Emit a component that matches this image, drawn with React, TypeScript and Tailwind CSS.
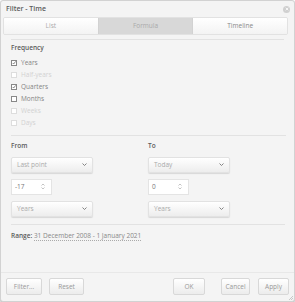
import React from "react";

const Check: React.FC<{ label: string; checked?: boolean; disabled?: boolean }> = ({
  label,
  checked,
  disabled,
}) => (
  <div className={`flex h-[12px] items-center gap-[4px] ${disabled ? "text-[#d2d2d2]" : "text-[#858585]"}`}>
    <span
      className={`flex h-[6px] w-[6px] items-center justify-center border bg-white ${
        disabled ? "border-[#ddd]" : "border-[#888]"
      }`}
    >
      {checked && (
        <svg width="6" height="6" viewBox="0 0 6 6">
          <path d="M1 3 L2.5 4.5 L5.5 0.5" fill="none" stroke="#555" strokeWidth="1" />
        </svg>
      )}
    </span>
    <span>{label}</span>
  </div>
);

const Chevron = () => (
  <svg width="5" height="3" viewBox="0 0 5 3">
    <path d="M0.5 0.5 L2.5 2.5 L4.5 0.5" fill="none" stroke="#777" strokeWidth="0.9" />
  </svg>
);

const Select: React.FC<{ value: string }> = ({ value }) => (
  <div className="flex h-[16px] w-[82px] items-center justify-between rounded-[2px] border border-[#e2e2e2] bg-gradient-to-b from-white to-[#ededed] pl-[5px] pr-[5px] text-[#aaa] shadow-[0_1px_1px_rgba(0,0,0,0.12)]">
    <span>{value}</span>
    <Chevron />
  </div>
);

const NumberInput: React.FC<{ value: string }> = ({ value }) => (
  <div className="flex h-[16px] w-[41px] items-center justify-between border border-[#e4e4e4] bg-white pl-[3px] pr-[6px] text-[#777]">
    <span>{value}</span>
    <svg width="4" height="7" viewBox="0 0 4 7">
      <path d="M0.5 2.5 L2 1 L3.5 2.5 M0.5 4.5 L2 6 L3.5 4.5" fill="none" stroke="#aaa" strokeWidth="0.7" />
    </svg>
  </div>
);

const Btn: React.FC<{ label: string; w: string }> = ({ label, w }) => (
  <div
    className={`flex h-[17px] ${w} items-center justify-center rounded-[2px] border border-[#d8d8d8] bg-gradient-to-b from-white to-[#ececec] text-[#999]`}
  >
    {label}
  </div>
);

export default function App() {
  return (
    <div
      className="relative flex h-[302px] w-[295px] flex-col overflow-hidden rounded-[3px] border border-[#d2d2d2] bg-[#f4f4f4] text-[6.5px] text-[#777] shadow-[0_1px_2px_rgba(0,0,0,0.3)]"
      style={{ fontFamily: '"Open Sans", "Noto Sans", sans-serif' }}
    >
      <div className="flex h-[16px] items-center justify-between pl-[5px] pr-[4px]">
        <span className="text-[7px] font-semibold text-[#5a5a5a]">Filter - Time</span>
        <span className="flex h-[7px] w-[7px] items-center justify-center rounded-full bg-[#d0d0d0]">
          <svg width="4" height="4" viewBox="0 0 4 4">
            <path d="M0.7 0.7 L3.3 3.3 M3.3 0.7 L0.7 3.3" stroke="#fff" strokeWidth="0.8" />
          </svg>
        </span>
      </div>

      <div className="mx-[2px] flex h-[18px] w-[285px] overflow-hidden rounded-[2px] border border-[#e2e2e2] text-[#aaa]">
        <div className="flex flex-1 items-center justify-center bg-gradient-to-b from-white to-[#f3f3f3]">List</div>
        <div className="flex flex-1 items-center justify-center border-x border-[#d2d2d2] bg-[#d8d8d8]">Formula</div>
        <div className="flex flex-1 items-center justify-center bg-gradient-to-b from-white to-[#f3f3f3] text-[#888]">
          Timeline
        </div>
      </div>

      <div className="ml-[10px] mr-[10px] mt-[4px] border-t border-[#e2e2e2]" />

      <div className="px-[10px] pt-[3px]">
        <div className="mb-[2px] h-[12px] font-semibold text-[#5a5a5a]">Frequency</div>
        <Check label="Years" checked />
        <Check label="Half-years" disabled />
        <Check label="Quarters" checked />
        <Check label="Months" />
        <Check label="Weeks" disabled />
        <Check label="Days" disabled />
      </div>

      <div className="ml-[10px] mr-[8px] mt-[6px] border-t border-[#e2e2e2]" />

      <div className="flex gap-[55px] px-[10px] pt-[5px]">
        <div className="flex w-[82px] flex-col gap-[6px]">
          <div className="font-semibold text-[#5a5a5a]">From</div>
          <Select value="Last point" />
          <NumberInput value="-17" />
          <Select value="Years" />
        </div>
        <div className="flex w-[82px] flex-col gap-[6px]">
          <div className="font-semibold text-[#5a5a5a]">To</div>
          <Select value="Today" />
          <NumberInput value="0" />
          <Select value="Years" />
        </div>
      </div>

      <div className="ml-[10px] mr-[9px] mt-[7px] border-t border-[#e2e2e2]" />

      <div className="px-[10px] pt-[6px]">
        <span className="font-semibold text-[#5a5a5a]">Range:</span>{" "}
        <span className="border-b border-dotted border-[#aaa] text-[#888]">31 December 2008 - 1 January 2021</span>
      </div>

      <div className="mt-auto flex items-center justify-between border-t border-[#e8e8e8] px-[5px] pb-[6px] pt-[5px]">
        <div className="flex gap-[7px]">
          <Btn label="Filter..." w="w-[36px]" />
          <Btn label="Reset" w="w-[35px]" />
        </div>
        <div className="flex">
          <Btn label="OK" w="w-[32px]" />
          <div className="w-[16px]" />
          <Btn label="Cancel" w="w-[29px]" />
          <div className="w-[8px]" />
          <Btn label="Apply" w="w-[31px]" />
        </div>
      </div>
      <svg className="absolute bottom-[1px] right-[1px]" width="5" height="5" viewBox="0 0 5 5">
        <path d="M5 1 L1 5 M5 3 L3 5" stroke="#aaa" strokeWidth="0.6" />
      </svg>
    </div>
  );
}
